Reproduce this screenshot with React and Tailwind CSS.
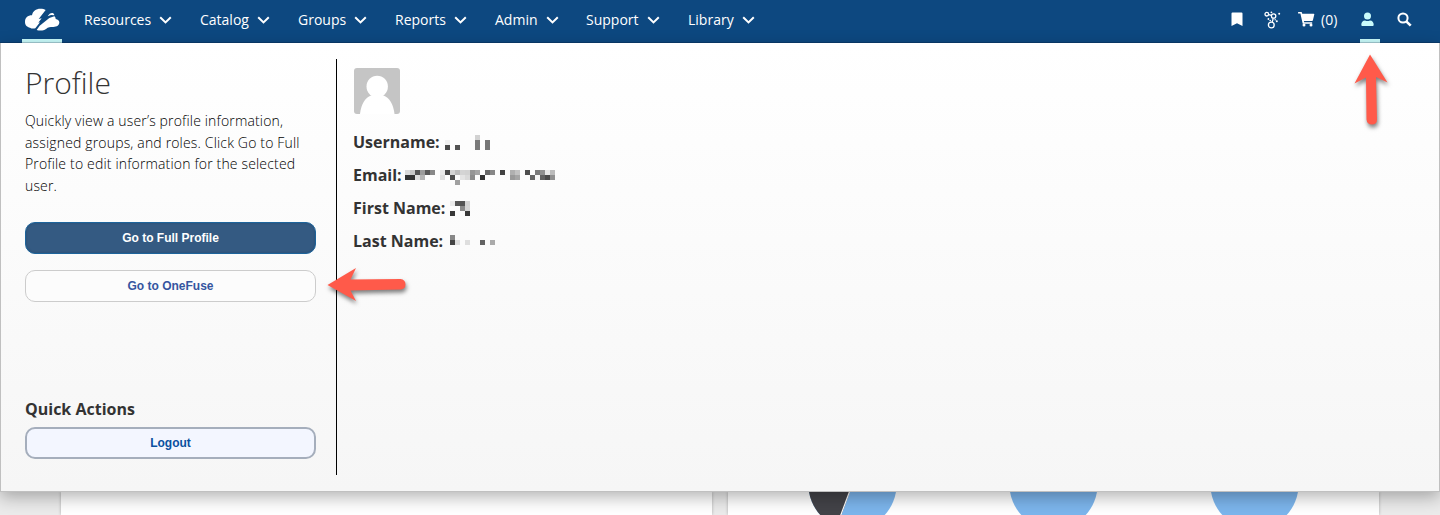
import React from "react";

const NAV = [
  { label: "Resources", slot: "w-[116px]", inner: "w-[88px]" },
  { label: "Catalog", slot: "w-[98px]", inner: "w-[70px]" },
  { label: "Groups", slot: "w-[97px]", inner: "w-[69px]" },
  { label: "Reports", slot: "w-[100px]", inner: "w-[72px]" },
  { label: "Admin", slot: "w-[91px]", inner: "w-[64px]" },
  { label: "Support", slot: "w-[102px]", inner: "w-[74px]" },
  { label: "Library", slot: "w-[80px]", inner: "w-[67px]" },
];

function CloudLogo() {
  return (
    <svg className="block h-6 w-9" viewBox="72 24 108 72">
      <path
        fill="#fff"
        d="M75 66C75 53 83 46 96 46C98 33 108 26 121 26C128 26 133 27 137 30L116 57L125 55L115 68L120 67L106 85C100 86 94 86 90 83C82 82 75 76 75 66z"
      />
      <path fill="#fff" d="M110 90L119 77L148 54L163 49C166 51 167 54 167 57C174 58 178 62 178 67C178 76 171 81 160 81C153 81 149 80 143 83C134 91 123 94 110 90z" />
      <path fill="#fff" d="M143 49C147 41 153 38 158 39C162 41 163 43 163 46L153 45z" />
    </svg>
  );
}

function Chevron() {
  return (
    <svg className="block h-2 w-[13px]" viewBox="0 0 13 8">
      <path d="M1.200 1.200L6.500 6.400L11.800 1.200" fill="none" stroke="#fff" strokeWidth="2" />
    </svg>
  );
}

function BookmarkIcon() {
  return (
    <svg className="block h-[15px] w-3" viewBox="0 0 12 15">
      <path fill="#fff" d="M.5 1.500Q.5.500 1.500.5h9q1 0 1 1V14L6 11.200.5 14z" />
    </svg>
  );
}

function MoleculeIcon() {
  return (
    <svg className="block h-[18px] w-[17px]" viewBox="0 0 17 18">
      <g fill="none" stroke="#fff" strokeWidth="1.300">
        <circle cx="2.800" cy="3.200" r="1.800" />
        <circle cx="9.600" cy="5" r="2.200" />
        <circle cx="7.300" cy="14" r="2.900" />
        <path d="M4.700 3.600l2.800.8M9.200 7.300l-1 3.800" />
      </g>
      <g fill="#fff">
        <circle cx="7.400" cy="1.300" r=".9" />
        <circle cx="15.200" cy="2.700" r="1" />
        <circle cx="4.400" cy="8" r=".9" />
        <circle cx="6.200" cy="9.600" r=".8" />
        <circle cx="12.800" cy="10.300" r="1" />
        <circle cx="11.200" cy="8.800" r=".7" />
      </g>
    </svg>
  );
}

function CartIcon() {
  return (
    <svg className="block h-[15px] w-[17px]" viewBox="0 0 17 15">
      <path
        fill="#fff"
        d="M.6 0h2.600q.6 0 .8.600L4.200 1.800h11.500q.8 0 .6.800l-1.400 5.700q-.2.700-.8.700H5.900l.3 1.300h7.500q.7 0 .6.800l-.2.700H5.300q-.6 0-.7-.6L2.400 1.500H.6Q0 1.500 0 .900V.6Q0 0 .6 0z"
      />
      <circle cx="6" cy="13" r="1.500" fill="#fff" />
      <circle cx="13" cy="13" r="1.500" fill="#fff" />
    </svg>
  );
}

function UserIcon() {
  return (
    <svg className="block h-[15px] w-[13px]" viewBox="0 0 13 15">
      <circle cx="6.500" cy="4" r="3.500" fill="#c9fbfb" />
      <path fill="#c9fbfb" d="M.3 12.800c0-2.700 1.500-4.300 3.700-4.300.9.400 1.700.5 2.500.5s1.600-.1 2.500-.5c2.200 0 3.700 1.600 3.700 4.300 0 .8-.5 1.300-1.300 1.300H1.600c-.8 0-1.300-.5-1.300-1.300z" />
    </svg>
  );
}

function SearchIcon() {
  return (
    <svg className="block h-[15px] w-[15px]" viewBox="0 0 15 15">
      <circle cx="6" cy="6" r="4.600" fill="none" stroke="#fff" strokeWidth="2" />
      <path d="M9.300 9.300L13.700 13.700" stroke="#fff" strokeWidth="2.600" />
    </svg>
  );
}

function Avatar() {
  return (
    <svg className="ml-px block h-[46px] w-[46px] rounded-[3px]" viewBox="0 0 46 46">
      <rect width="46" height="46" fill="#c5c5c5" />
      <ellipse cx="23.200" cy="18.500" rx="10.700" ry="10.800" fill="#fff" />
      <path d="M6 46C7 36 11.500 29.500 17 27.500h12.500C35 29.500 39.500 36 40.500 46z" fill="#fff" />
    </svg>
  );
}

/* Each block is [column, row, grey level] on a 5px grid. */
const USERNAME = [
  [0, 1, 240], [0, 2, 72], [2, 2, 84], [6, 0, 210], [6, 1, 122], [6, 2, 122], [8, 1, 118], [8, 2, 118],
];
const EMAIL = [
  [0, 0, 218], [1, 0, 200], [2, 0, 84], [3, 0, 155], [4, 0, 88], [5, 0, 136],
  [0, 1, 50], [1, 1, 50], [2, 1, 222], [3, 1, 180],
  [7, 0, 232], [8, 0, 72], [9, 0, 212], [10, 0, 188], [11, 0, 212], [12, 0, 210], [13, 0, 150], [14, 0, 165],
  [7, 1, 222], [9, 1, 78], [11, 1, 228], [12, 1, 218], [13, 1, 140], [15, 1, 50], [10, 2, 160],
  [16, 0, 104], [17, 0, 135], [19, 0, 66],
  [21, 0, 176], [22, 0, 194], [21, 1, 154], [22, 1, 166],
  [24, 0, 78], [25, 1, 100], [26, 0, 122], [27, 0, 144], [26, 1, 246], [27, 1, 98], [28, 0, 232], [28, 1, 74], [29, 0, 188], [29, 1, 144],
];
const FIRST_NAME = [
  [0, 0, 234], [1, 0, 84], [2, 0, 84], [3, 0, 212], [2, 1, 138], [3, 1, 214], [0, 2, 56], [3, 2, 56],
];
const LAST_NAME = [
  [0, 0, 136], [0, 1, 68], [1, 1, 222], [3, 1, 222], [6, 1, 98], [8, 1, 170],
];

function Mosaic({ cells, className }) {
  return (
    <svg className={"block h-[15px] w-[150px] " + className} viewBox="0 0 150 15" shapeRendering="crispEdges">
      {cells.map(([c, r, v]) => (
        <rect key={c + "-" + r} x={c * 5} y={r * 5} width="5" height="5" fill={`rgb(${v},${v},${v})`} />
      ))}
    </svg>
  );
}

function Field({ label, width, cells, offset }) {
  return (
    <div className="flex h-[33px] items-start">
      <span className={"shrink-0 text-[16px] font-bold leading-[22px] text-[#333] " + width}>{label}</span>
      <Mosaic cells={cells} className={offset} />
    </div>
  );
}

export default function App() {
  return (
    <div className="relative flex h-[515px] w-[1440px] flex-col overflow-hidden bg-[#ebebeb] font-['Open_Sans',sans-serif]">
      <header className="flex h-[43px] shrink-0 border-b border-[#0a3b6c] bg-[#0d4880] text-white">
        <div className="ml-[22px] flex h-[43px] w-10 shrink-0 flex-col items-center justify-between">
          <div className="pt-2">
            <CloudLogo />
          </div>
          <div className="h-1 w-10 border-b border-[#a2cbd3] bg-[#c9fbfb]" />
        </div>
        <nav className="ml-[22px] flex h-10 items-center text-[14px] font-[450]">
          {NAV.map((n) => (
            <div key={n.label} className={n.slot}>
              <div className={"flex items-center justify-between " + n.inner}>
                <span className="pb-[2px]">{n.label}</span>
                <Chevron />
              </div>
            </div>
          ))}
        </nav>
        <div className="ml-auto flex h-[39px] items-center pr-[28px]">
          <BookmarkIcon />
          <div className="ml-[21px]">
            <MoleculeIcon />
          </div>
          <div className="ml-[17px] flex w-[40px] items-center gap-[6px] text-[14px] font-[450]">
            <div className="shrink-0">
              <CartIcon />
            </div>
            <span>(0)</span>
          </div>
          <div className="ml-[22px] flex h-[43px] w-5 flex-col items-center justify-between self-start">
            <div className="pr-[5px] pt-[12px]">
              <UserIcon />
            </div>
            <div className="h-1 w-5 border-b border-[#a2cbd3] bg-[#c9fbfb]" />
          </div>
          <div className="ml-[17px]">
            <SearchIcon />
          </div>
        </div>
      </header>

      <section className="z-10 flex h-[449px] shrink-0 border-x border-b border-[#c0c0c0] bg-linear-to-b from-white to-[#f6f6f6] pt-4 shadow-[0_5px_16px_rgba(0,0,0,0.3)]">
        <aside className="flex h-[416px] w-[336px] shrink-0 flex-col border-r border-black pl-6">
          <h1 className="mt-[4px] text-[30px] font-light leading-[40px] text-[#333]">Profile</h1>
          <p className="mt-[7px] w-[290px] whitespace-nowrap text-[14px] font-light leading-[21.700px] tracking-[0.165px] text-black">
            Quickly view a user’s profile information,
            <br />
            assigned groups, and roles. Click Go to Full
            <br />
            Profile to edit information for the selected
            <br />
            user.
          </p>
          <div className="mt-[25px] flex w-[291px] flex-col gap-4 font-['Liberation_Sans',Arial,sans-serif] text-[12px] font-bold">
            <button className="h-8 rounded-[10px] border border-[#1d649b] bg-[#345a82] text-white shadow-[inset_0_0_2px_rgba(20,60,100,0.5)]">
              Go to Full Profile
            </button>
            <button className="h-8 rounded-[10px] border border-[#ccc] bg-[#fcfcfc] text-[#3555a0]">Go to OneFuse</button>
          </div>
          <h2 className="mt-[96px] text-[16px] font-bold leading-[22px] text-[#333]">Quick Actions</h2>
          <button className="mt-[7px] h-8 w-[291px] rounded-[10px] border-2 border-[#a5aebc] bg-[#f3f6ff] font-['Liberation_Sans',Arial,sans-serif] text-[12px] font-bold text-[#0950a0]">
            Logout
          </button>
        </aside>
        <div className="flex flex-col pl-4 pt-[9px]">
          <Avatar />
          <div className="mt-[17px] flex flex-col">
            <Field label="Username:" width="w-[92px]" cells={USERNAME} offset="mt-1" />
            <Field label="Email:" width="w-[52px]" cells={EMAIL} offset="mt-[6px]" />
            <Field label="First Name:" width="w-[97px]" cells={FIRST_NAME} offset="mt-1" />
            <Field label="Last Name:" width="w-[97px]" cells={LAST_NAME} offset="mt-[5px]" />
          </div>
        </div>
      </section>

      <main className="flex h-[23px] gap-4 overflow-hidden pl-[61px]">
        <div className="w-[651px] bg-white shadow-[0_0_3px_rgba(0,0,0,0.25)]" />
        <div className="w-[651px] bg-white shadow-[0_0_3px_rgba(0,0,0,0.25)]">
          <svg className="block h-[23px] w-[651px]" viewBox="728 492 651 23">
            <circle cx="852.5" cy="485" r="44" fill="#7cb5ec" />
            <path d="M852.5 485L836 530H790V485z" fill="#434348" clipPath="url(#pie-clip)" />
            <clipPath id="pie-clip">
              <circle cx="852.5" cy="485" r="44" />
            </clipPath>
            <path d="M852 485L836 528" stroke="#fff" strokeWidth="1.200" />
            <circle cx="1053.5" cy="485" r="44" fill="#7cb5ec" />
            <circle cx="1254.500" cy="485" r="44" fill="#7cb5ec" />
          </svg>
        </div>
      </main>

      <svg className="absolute left-[1346px] top-[48px] z-20 h-[86px] w-[50px]" viewBox="1346 48 50 86">
        <path
          className="drop-shadow-[1px_3px_2px_rgba(0,0,0,0.5)]"
          fill="#ff5a4a"
          d="M1370 54.500L1387.500 82.500L1376 77L1377 119.500Q1377 124.500 1372 124.500Q1367 124.500 1366.500 119.500L1366 77.500L1354.500 83.500z"
        />
      </svg>
      <svg className="absolute left-[320px] top-[260px] z-20 h-[50px] w-[94px]" viewBox="320 260 94 50">
        <path
          className="drop-shadow-[1px_3px_2px_rgba(0,0,0,0.5)]"
          fill="#ff5a4a"
          d="M327.500 285L356 268L350.500 279.500L400.500 279Q405.500 279.500 405.500 284.500Q405.500 289 400.500 289.500L350.500 290.500L356 301z"
        />
      </svg>
    </div>
  );
}
